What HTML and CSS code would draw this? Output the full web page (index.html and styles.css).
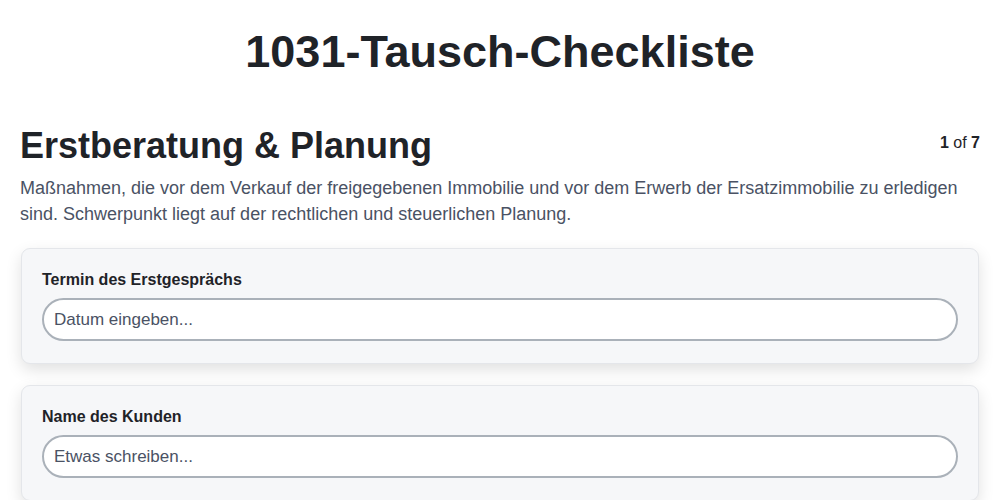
FILE: index.html
```html
<!DOCTYPE html>
<html lang="de">
<head>
    <meta charset="UTF-8">
    <meta name="viewport" content="width=device-width, initial-scale=1.0">
    <title>1031-Tausch-Checkliste</title>
    <link rel="stylesheet" href="styles.css">
</head>
<body>
<div class="container">
    <h1 class="page-title">1031-Tausch-Checkliste</h1>

    <section class="step">
        <div class="step-header">
            <h2>Erstberatung &amp; Planung</h2>
            <span class="step-count"><b>1</b> of <b>7</b></span>
        </div>
        <p class="step-desc">Maßnahmen, die vor dem Verkauf der freigegebenen Immobilie und vor dem Erwerb der Ersatzimmobilie zu erledigen sind. Schwerpunkt liegt auf der rechtlichen und steuerlichen Planung.</p>

        <div class="card">
            <label for="termin">Termin des Erstgesprächs</label>
            <input id="termin" type="text" placeholder="Datum eingeben...">
        </div>

        <div class="card">
            <label for="kunde">Name des Kunden</label>
            <input id="kunde" type="text" placeholder="Etwas schreiben...">
        </div>
    </section>
</div>
</body>
</html>
```

FILE: styles.css
```css
:root {
    --color-text: #1f2328;
    --color-text-light: #4a5264;
    --color-card: #f6f7f9;
    --color-border: #e4e6ea;
    --color-input-border: #aab1b9;
    --font-sans: 'Liberation Sans', Arial, Helvetica, sans-serif;
}

* {
    box-sizing: border-box;
    margin: 0;
    padding: 0;
}

body {
    font-family: var(--font-sans);
    color: var(--color-text);
    background-color: #fff;
}

.container {
    padding: 0 20px;
}

.page-title {
    font-size: 45px;
    font-weight: 700;
    text-align: center;
    line-height: 56px;
    padding-top: 24px;
    margin-bottom: 44px;
}

.step-header {
    display: flex;
    justify-content: space-between;
    align-items: flex-start;
}

.step-header h2 {
    font-size: 36px;
    font-weight: 700;
    line-height: 44px;
}

.step-count {
    font-size: 16px;
    padding-top: 10px;
    color: var(--color-text);
}

.step-desc {
    font-size: 18px;
    line-height: 26px;
    color: var(--color-text-light);
    margin-top: 7px;
    margin-bottom: 21px;
}

.card {
    margin: 0 1px 21px;
    background-color: var(--color-card);
    border: 1px solid var(--color-border);
    border-radius: 9px;
    padding: 21px 20px 22px;
    box-shadow: 0 6px 16px rgba(0, 0, 0, 0.12);
    display: flex;
    flex-direction: column;
    gap: 8px;
}

.card label {
    font-size: 16px;
    font-weight: 700;
    line-height: 20px;
}

.card input {
    height: 43px;
    width: 100%;
    border: 2px solid var(--color-input-border);
    border-radius: 22px;
    background: #fff;
    padding: 0 10px;
    font-family: var(--font-sans);
    font-size: 17px;
    color: var(--color-text);
}

.card input::placeholder {
    color: var(--color-text-light);
}
```
